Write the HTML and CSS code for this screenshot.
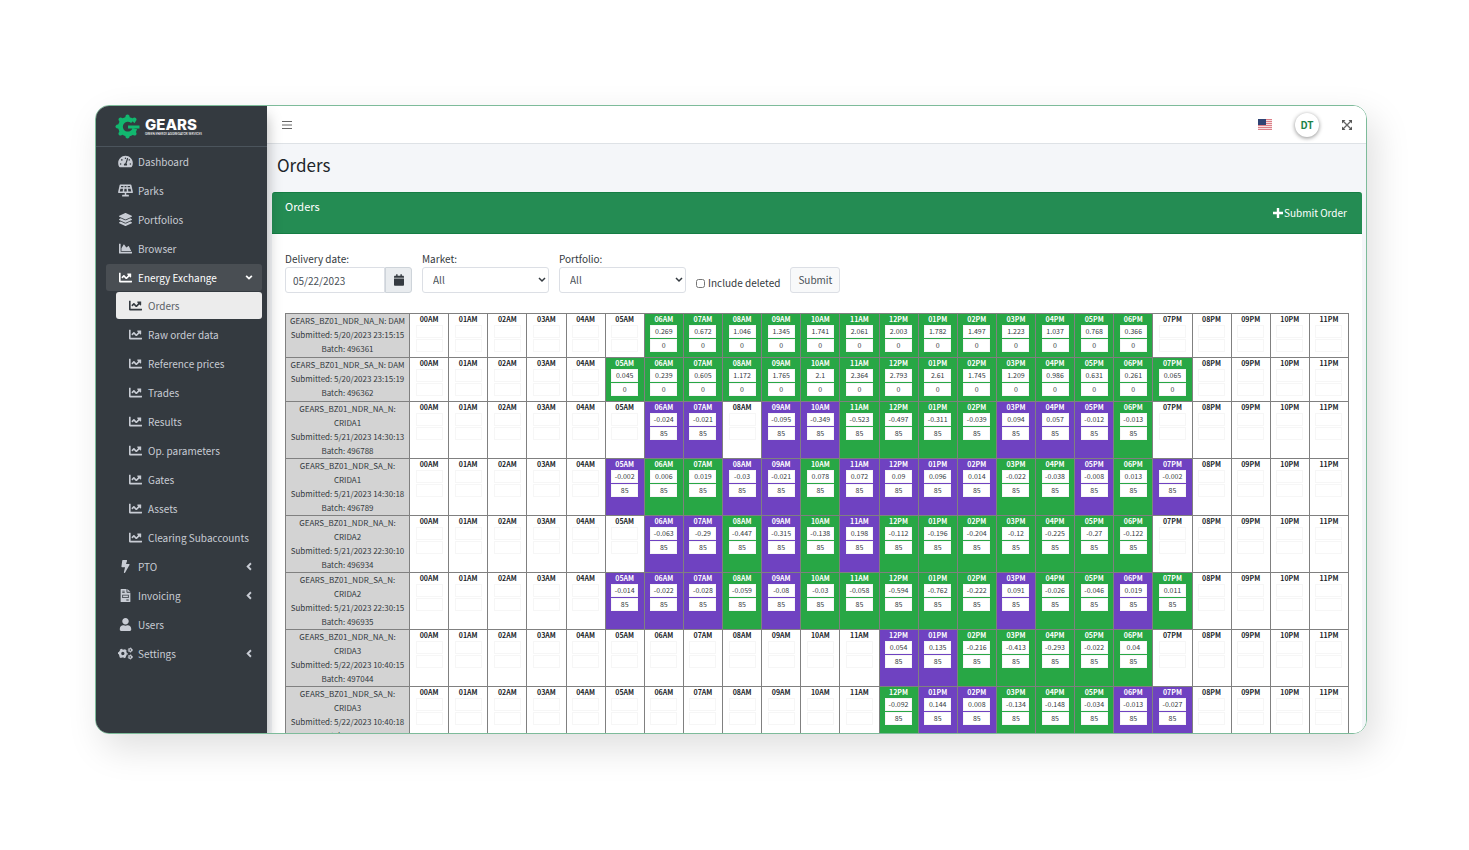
FILE: index.html
```html
<!DOCTYPE html>
<html lang="en">
<head>
<meta charset="utf-8">
<title>GEARS - Orders</title>
<link rel="stylesheet" href="styles.css">
</head>
<body>
<svg class="sprite" aria-hidden="true">
  <symbol id="i-line" viewBox="0 0 512 512"><path d="M496 384H64V80c0-8.84-7.16-16-16-16H16C7.16 64 0 71.16 0 80v336c0 17.67 14.33 32 32 32h464c8.84 0 16-7.16 16-16v-32c0-8.84-7.16-16-16-16zM464 96H345.94c-21.38 0-32.09 25.85-16.97 40.97l32.4 32.4L288 242.75l-73.37-73.37c-12.5-12.5-32.76-12.5-45.25 0l-68.69 68.69c-6.25 6.25-6.25 16.38 0 22.63l22.62 22.62c6.25 6.25 16.38 6.25 22.63 0L192 237.25l73.37 73.37c12.5 12.5 32.76 12.5 45.25 0l96-96 32.4 32.4c15.12 15.12 40.97 4.41 40.97-16.97V112c.01-8.84-7.15-16-15.99-16z"/></symbol>
  <symbol id="i-dash" viewBox="0 0 576 512"><path d="M288 32C128.94 32 0 160.94 0 320c0 52.8 14.25 102.26 39.06 144.8 5.61 9.62 16.3 15.2 27.44 15.2h443c11.14 0 21.83-5.58 27.44-15.2C561.75 422.26 576 372.8 576 320c0-159.06-128.94-288-288-288zm0 64c14.71 0 26.58 10.13 30.32 23.65-1.11 2.26-2.64 4.23-3.45 6.67l-9.22 27.67c-5.13 3.49-10.97 6.01-17.64 6.01-17.67 0-32-14.33-32-32S270.33 96 288 96zM96 384c-17.67 0-32-14.33-32-32s14.33-32 32-32 32 14.33 32 32-14.33 32-32 32zm48-160c-17.67 0-32-14.33-32-32s14.33-32 32-32 32 14.33 32 32-14.33 32-32 32zm246.77-72.41l-61.33 184C343.13 347.33 352 364.54 352 384c0 11.72-3.38 22.55-8.88 32H232.88c-5.5-9.45-8.88-20.28-8.88-32 0-33.94 26.5-61.43 59.9-63.59l61.34-184.01c4.17-12.56 17.73-19.45 30.36-15.17 12.57 4.19 19.35 17.79 15.17 30.36zm14.66 57.2l15.52-46.55c3.47-1.29 7.13-2.23 11.05-2.23 17.67 0 32 14.33 32 32s-14.33 32-32 32c-11.38-.01-20.89-6.28-26.57-15.22zM480 384c-17.67 0-32-14.33-32-32s14.33-32 32-32 32 14.33 32 32-14.33 32-32 32z"/></symbol>
  <symbol id="i-solar" viewBox="0 0 640 512"><path fill-rule="evenodd" d="M100 0h440q24 0 30 26l68 300q4 34-30 34H352v82h96q16 0 16 16v38q0 16-16 16H192q-16 0-16-16v-38q0-16 16-16h96v-82H32q-34 0-30-34L70 26q6-26 30-26zM134 60l-14 60h106l8-60zM284 60l-6 60h84l-6-60zM406 60l8 60h106l-14-60zM102 184l-24 112h122l14-112zM276 184l-12 112h112l-12-112zM426 184l14 112h122l-24-112z"/></symbol>
  <symbol id="i-layers" viewBox="0 0 512 512"><path d="M12.41 148.02l232.94 105.67c6.8 3.09 14.49 3.09 21.29 0l232.94-105.67c16.55-7.51 16.55-32.52 0-40.03L266.65 2.31a25.607 25.607 0 0 0-21.29 0L12.41 107.98c-16.55 7.51-16.55 32.53 0 40.04zm487.18 88.28l-58.09-26.33-161.64 73.27c-7.56 3.43-15.59 5.17-23.86 5.17s-16.29-1.74-23.86-5.17L70.51 209.97l-58.1 26.33c-16.55 7.5-16.55 32.5 0 40l232.94 105.59c6.8 3.08 14.49 3.08 21.29 0L499.59 276.3c16.55-7.5 16.55-32.5 0-40zm0 127.8l-57.87-26.23-161.86 73.37c-7.56 3.43-15.59 5.17-23.86 5.17s-16.29-1.74-23.86-5.17L70.29 337.87 12.41 364.1c-16.55 7.5-16.55 32.5 0 40l232.94 105.59c6.8 3.08 14.49 3.08 21.29 0L499.59 404.1c16.55-7.5 16.55-32.5 0-40z"/></symbol>
  <symbol id="i-area" viewBox="0 0 512 512"><path d="M500 384c6.6 0 12 5.4 12 12v40c0 6.6-5.4 12-12 12H12c-6.6 0-12-5.4-12-12V76c0-6.6 5.4-12 12-12h40c6.6 0 12 5.4 12 12v308h436zM372.7 159.5L288 216l-85.3-113.7c-5.1-6.8-15.5-6.3-19.9 1L96 248v104h384l-89.9-187.8c-3.2-6.5-11.4-8.7-17.4-4.7z"/></symbol>
  <symbol id="i-bolt" viewBox="0 0 320 512"><path d="M296 160H180.6l42.6-129.8C227.2 15 215.7 0 200 0H56C44 0 33.8 8.9 32.2 20.8l-32 240C-1.7 275.2 9.5 288 24 288h118.7L96.6 482.5c-3.6 15.2 8 29.5 23.3 29.5 8.4 0 16.4-4.4 20.8-12l176-304c9.3-15.9-2.2-36-20.7-36z"/></symbol>
  <symbol id="i-invoice" viewBox="0 0 384 512"><path fill-rule="evenodd" d="M24 0h208v120q0 24 24 24h128v344q0 24-24 24H24q-24 0-24-24V24Q0 0 24 0zM264 0l120 112H264zM64 64v32h96V64zM64 128v32h96v-32zM64 224v128h256V224zM96 256h192v64H96zM224 416v32h96v-32z"/></symbol>
  <symbol id="i-user" viewBox="0 0 448 512"><path d="M224 256c70.7 0 128-57.3 128-128S294.7 0 224 0 96 57.3 96 128s57.3 128 128 128zm89.6 32h-16.7c-22.2 10.2-46.9 16-72.9 16s-50.6-5.8-72.9-16h-16.7C60.2 288 0 348.2 0 422.4V464c0 26.5 21.5 48 48 48h352c26.5 0 48-21.5 48-48v-41.6c0-74.2-60.2-134.4-134.4-134.4z"/></symbol>
  <symbol id="i-cogs" viewBox="0 0 640 512"><g fill="none" stroke="currentColor"><circle cx="206" cy="256" r="120" stroke-width="100"/><circle cx="206" cy="256" r="180" stroke-width="52" stroke-dasharray="94 94.500" stroke-dashoffset="47"/><circle cx="524" cy="110" r="60" stroke-width="52"/><circle cx="524" cy="110" r="92" stroke-width="34" stroke-dasharray="50 46.300"/><circle cx="524" cy="402" r="60" stroke-width="52"/><circle cx="524" cy="402" r="92" stroke-width="34" stroke-dasharray="50 46.300"/></g></symbol>
  <symbol id="i-left" viewBox="0 0 10 14"><path d="M8 2 3 7l5 5" fill="none" stroke="currentColor" stroke-width="3"/></symbol>
  <symbol id="i-down" viewBox="0 0 14 10"><path d="m2 2 5 5 5-5" fill="none" stroke="currentColor" stroke-width="3"/></symbol>
  <symbol id="i-cal" viewBox="0 0 448 512"><path d="M12 192h424c6.6 0 12 5.4 12 12v260c0 26.5-21.5 48-48 48H48c-26.5 0-48-21.5-48-48V204c0-6.6 5.4-12 12-12zm436-44v-36c0-26.5-21.5-48-48-48h-48V12c0-6.6-5.4-12-12-12h-40c-6.6 0-12 5.4-12 12v52H160V12c0-6.6-5.4-12-12-12h-40c-6.6 0-12 5.4-12 12v52H48C21.5 64 0 85.5 0 112v36c0 6.6 5.4 12 12 12h424c6.6 0 12-5.4 12-12z"/></symbol>
</svg>
<div class="app">
  <aside class="sidebar">
    <a class="brand" href="#">
      <svg class="brand-mark" viewBox="0 0 48 48" aria-hidden="true">
        <g fill="none" stroke="#12b76f">
          <path d="M34 14A14 14 0 1 0 38 28" stroke-width="9"/>
          <path d="M47 25H25" stroke-width="6"/>
        </g>
        <g fill="#12b76f">
          <path id="tooth" d="M19 10 20.500 3q3.500-4 7 0L29 10z"/>
          <use href="#tooth" transform="rotate(45 24 24)"/>
          <use href="#tooth" transform="rotate(135 24 24)"/>
          <use href="#tooth" transform="rotate(180 24 24)"/>
          <use href="#tooth" transform="rotate(225 24 24)"/>
          <use href="#tooth" transform="rotate(270 24 24)"/>
          <use href="#tooth" transform="rotate(315 24 24)"/>
        </g>
      </svg>
      <span class="brand-text"><span class="brand-name">GEARS</span><span class="brand-tag">GREEN ENERGY AGGREGATOR SERVICES</span></span>
    </a>
    <nav>
      <ul class="nav">
        <li><a href="#"><svg class="ico"><use href="#i-dash"/></svg>Dashboard</a></li>
        <li><a href="#"><svg class="ico"><use href="#i-solar"/></svg>Parks</a></li>
        <li><a href="#"><svg class="ico"><use href="#i-layers"/></svg>Portfolios</a></li>
        <li><a href="#"><svg class="ico"><use href="#i-area"/></svg>Browser</a></li>
        <li><a href="#" class="open"><svg class="ico"><use href="#i-line"/></svg>Energy Exchange<svg class="caret"><use href="#i-down"/></svg></a>
          <ul class="nav sub">
            <li><a href="#" class="current"><svg class="ico"><use href="#i-line"/></svg>Orders</a></li>
            <li><a href="#"><svg class="ico"><use href="#i-line"/></svg>Raw order data</a></li>
            <li><a href="#"><svg class="ico"><use href="#i-line"/></svg>Reference prices</a></li>
            <li><a href="#"><svg class="ico"><use href="#i-line"/></svg>Trades</a></li>
            <li><a href="#"><svg class="ico"><use href="#i-line"/></svg>Results</a></li>
            <li><a href="#"><svg class="ico"><use href="#i-line"/></svg>Op. parameters</a></li>
            <li><a href="#"><svg class="ico"><use href="#i-line"/></svg>Gates</a></li>
            <li><a href="#"><svg class="ico"><use href="#i-line"/></svg>Assets</a></li>
            <li><a href="#"><svg class="ico"><use href="#i-line"/></svg>Clearing Subaccounts</a></li>
          </ul>
        </li>
        <li><a href="#"><svg class="ico"><use href="#i-bolt"/></svg>PTO<svg class="caret"><use href="#i-left"/></svg></a></li>
        <li><a href="#"><svg class="ico"><use href="#i-invoice"/></svg>Invoicing<svg class="caret"><use href="#i-left"/></svg></a></li>
        <li><a href="#"><svg class="ico"><use href="#i-user"/></svg>Users</a></li>
        <li><a href="#"><svg class="ico"><use href="#i-cogs"/></svg>Settings<svg class="caret"><use href="#i-left"/></svg></a></li>
      </ul>
    </nav>
  </aside>
  <div class="main">
    <header class="topbar">
      <button class="plain" type="button" aria-label="Toggle menu"><svg width="10" height="10" viewBox="0 0 10 10"><path d="M0 1.500h10M0 5h10M0 8.500h10" stroke="#666" stroke-width="1.200"/></svg></button>
      <div class="tools">
        <button class="plain" type="button" aria-label="Language"><svg width="14" height="11" viewBox="0 0 14 11"><path fill="#f6dfe1" d="M0 0h14v11H0z"/><path d="M0 .500h14M0 2.500h14M0 4.500h14M0 6.500h14M0 8.500h14M0 10.500h14" stroke="#dc7f88"/><path fill="#2f4374" d="M0 0h8v6H0z"/></svg></button>
        <button class="avatar" type="button">DT</button>
        <button class="plain" type="button" aria-label="Full screen"><svg width="10" height="10" viewBox="0 0 10 10"><path d="M1 1l8 8M9 1 1 9" stroke="#666" stroke-width="1.300"/><path fill="#555" d="M0 0h3.500L0 3.500zM10 0v3.500L6.500 0zM0 10V6.500L3.500 10zM10 10H6.500L10 6.500z"/></svg></button>
      </div>
    </header>
    <main>
      <h1>Orders</h1>
      <section class="card">
        <header class="card-head">
          <h2>Orders</h2>
          <button class="add" type="button"><svg width="10" height="10" viewBox="0 0 10 10"><path d="M5 0v10M0 5h10" stroke="#fff" stroke-width="2.400"/></svg>Submit Order</button>
        </header>
        <div class="card-body">
          <form class="filters">
            <div class="field">
              <label for="date">Delivery date:</label>
              <div class="group"><input id="date" type="text" value="05/22/2023"><button type="button" aria-label="Pick a date"><svg width="10" height="12"><use href="#i-cal"/></svg></button></div>
            </div>
            <div class="field">
              <label for="market">Market:</label>
              <div class="pick"><select id="market"><option>All</option></select><svg class="arrow" width="8" height="6" viewBox="0 0 8 6"><path d="m1 1 3 3 3-3" fill="none" stroke="#343a40" stroke-width="1.500"/></svg></div>
            </div>
            <div class="field">
              <label for="portfolio">Portfolio:</label>
              <div class="pick"><select id="portfolio"><option>All</option></select><svg class="arrow" width="8" height="6" viewBox="0 0 8 6"><path d="m1 1 3 3 3-3" fill="none" stroke="#343a40" stroke-width="1.500"/></svg></div>
            </div>
            <div class="check"><input id="deleted" type="checkbox"><label for="deleted">Include deleted</label></div>
            <button class="submit" type="submit">Submit</button>
          </form>
          <table class="orders"><tbody id="orders"></tbody></table>
        </div>
      </section>
    </main>
  </div>
</div>
<script src="orders.js"></script>
</body>
</html>
```
FILE: styles.css
```css
* { box-sizing: border-box; }
body {
  margin: 0;
  height: 100vh;
  padding: 105px 102px 116px 95px;
  display: flex;
  background: #fff;
  color: #343a40;
  font: 10px/14px "Noto Sans CJK SC", "Noto Sans", sans-serif;
}
a { color: inherit; text-decoration: none; }
button, input, select { font: inherit; color: inherit; }
button { padding: 0; border: 0; background: none; }
svg { fill: currentColor; flex: none; }
h1, h2 { margin: 0; font-weight: 400; }
.sprite { display: none; }

.app {
  flex: 1;
  min-width: 0;
  display: flex;
  overflow: hidden;
  border: 1px solid #7dbb9a;
  border-radius: 14px;
  box-shadow: 8px 14px 36px rgba(0, 0, 0, .13);
}

.sidebar {
  flex: none;
  width: 171px;
  background: #343a40;
  color: #c8ccd4;
  box-shadow: 0 10px 14px rgba(0, 0, 0, .3);
  z-index: 1;
}
.brand {
  display: flex;
  align-items: center;
  gap: 5px;
  height: 41px;
  padding-left: 19px;
  border-bottom: 1px solid #4b545c;
}
.brand-mark { width: 25px; height: 25px; }
.brand-text { display: flex; flex-direction: column; color: #fff; }
.brand-name { font: 800 15px/15px Inter, sans-serif; }
.brand-tag { font: 500 3px/4px Lato, sans-serif; white-space: nowrap; }

.nav { list-style: none; margin: 0; padding: 1px 5px 0 10px; display: grid; gap: 2px; }
.sub { padding: 1px 0 0 10px; }
.nav a {
  display: flex;
  align-items: center;
  gap: 5px;
  height: 27px;
  padding: 0 9px 0 12px;
  border-radius: 3px;
}
.sub a { gap: 5px; padding-right: 0; }
.nav .open { background: #494e53; color: #fff; }
.nav .current { background: #ececec; color: #5a6066; }
.current .ico { color: #343a40; }
.ico { width: 15px; height: 13px; }
.caret { width: 8px; height: 9px; margin-left: auto; }

.main { flex: 1; min-width: 0; background: #f4f6f9; }
.topbar {
  display: flex;
  justify-content: space-between;
  align-items: center;
  height: 38px;
  padding: 0 14px 0 15px;
  background: #fff;
  border-bottom: 1px solid #dee2e6;
}
.tools { display: flex; align-items: center; gap: 23px; }
.plain { display: flex; }
.avatar {
  width: 24px;
  height: 24px;
  border-radius: 50%;
  background: #fff;
  color: #1d8348;
  font-weight: 700;
  font-size: 10px;
  box-shadow: 0 1px 4px rgba(0, 0, 0, .45);
}
main { padding: 0 4px 0 5px; }
h1 { padding: 9px 5px 15px; font-size: 17px; line-height: 24px; color: #212529; }

.card { background: #fff; border-radius: 3px 3px 0 0; }
.card-head {
  display: flex;
  justify-content: space-between;
  height: 42px;
  padding: 7px 15px 0 13px;
  background: #248c53;
  border: solid #157d44;
  border-width: 1px 0;
  border-radius: 3px 3px 0 0;
  color: #fff;
}
.card-head h2 { font-size: 11px; line-height: 13px; }
.add { display: flex; align-items: center; gap: 1px; height: 26px; }
.card-body { padding: 18px 13px; }

.filters { display: flex; align-items: flex-end; gap: 10px; margin-bottom: 20px; }
.field { width: 127px; }
.field label { display: block; margin-bottom: 1px; }
.group { display: flex; }
.group input, .pick select, .submit {
  height: 26px;
  border: 1px solid #dcdfe5;
  border-radius: 3px;
  background: #fff;
  color: #495057;
}
.group input { flex: 1; min-width: 0; padding: 0 7px; border-radius: 3px 0 0 3px; }
.group button {
  display: grid;
  place-items: center;
  width: 27px;
  background: #e9ecef;
  border: 1px solid #ced4da;
  border-radius: 0 3px 3px 0;
}
.pick { display: grid; align-items: center; }
.pick select, .arrow { grid-area: 1 / 1; }
.pick select { appearance: none; width: 100%; padding: 0 10px; }
.arrow { justify-self: end; margin-right: 3px; pointer-events: none; }
.check { display: flex; align-items: center; gap: 3px; padding-bottom: 3px; }
.check input { width: 9px; height: 9px; margin: 0; }
.filters .submit { width: 50px; background: #f8f9fa; }

.orders { width: 100%; table-layout: fixed; border-collapse: collapse; }
.orders th, .orders td { padding: 0; border: 1px solid #808080; vertical-align: top; text-align: center; }
.orders th { width: 124px; background: #d3d3d3; font-size: 8px; font-weight: 400; white-space: nowrap; }
.short { height: 44px; }
.hour { display: block; font-size: 7px; line-height: 11px; font-weight: 700; color: #212529; }
.cell { display: grid; gap: 1px; width: 27px; margin: 0 auto; }
.cell span { height: 13px; border: 1px solid #f6f6f6; background: #fff; font-size: 7px; line-height: 11px; }
.buy { background: #28a745; }
.sell { background: #6f42c1; }
.buy .hour, .sell .hour { color: #fff; }
```
FILE: orders.js
```js
// Each order: name lines, submission time, batch, quantity, first hour, values.
// A value starts with "g" (buy) or "p" (sell); "x" is an empty hour.
const orders = [
  [["GEARS_BZ01_NDR_NA_N: DAM"], "5/20/2023 23:15:15", 496361, 0, 6, "g0.269 g0.672 g1.046 g1.345 g1.741 g2.061 g2.003 g1.782 g1.497 g1.223 g1.037 g0.768 g0.366"],
  [["GEARS_BZ01_NDR_SA_N: DAM"], "5/20/2023 23:15:19", 496362, 0, 5, "g0.045 g0.239 g0.605 g1.172 g1.765 g2.1 g2.364 g2.793 g2.61 g1.745 g1.209 g0.986 g0.631 g0.261 g0.065"],
  [["GEARS_BZ01_NDR_NA_N:", "CRIDA1"], "5/21/2023 14:30:13", 496788, 85, 6, "p-0.024 p-0.021 x p-0.095 p-0.349 g-0.523 g-0.497 g-0.311 g-0.039 p0.094 p0.057 p-0.012 g-0.013"],
  [["GEARS_BZ01_NDR_SA_N:", "CRIDA1"], "5/21/2023 14:30:18", 496789, 85, 5, "p-0.002 g0.006 g0.019 p-0.03 p-0.021 g0.078 p0.072 p0.09 p0.096 p0.014 g-0.022 g-0.038 p-0.008 g0.013 p-0.002"],
  [["GEARS_BZ01_NDR_NA_N:", "CRIDA2"], "5/21/2023 22:30:10", 496934, 85, 6, "p-0.063 p-0.29 g-0.447 p-0.315 g-0.138 p0.198 g-0.112 g-0.196 g-0.204 g-0.12 g-0.225 g-0.27 g-0.122"],
  [["GEARS_BZ01_NDR_SA_N:", "CRIDA2"], "5/21/2023 22:30:15", 496935, 85, 5, "p-0.014 p-0.022 p-0.028 g-0.059 p-0.08 g-0.03 g-0.058 g-0.594 g-0.762 g-0.222 p0.091 g-0.026 g-0.046 p0.019 g0.011"],
  [["GEARS_BZ01_NDR_NA_N:", "CRIDA3"], "5/22/2023 10:40:15", 497044, 85, 12, "p0.054 p0.135 g-0.216 g-0.413 g-0.293 g-0.022 g0.04"],
  [["GEARS_BZ01_NDR_SA_N:", "CRIDA3"], "5/22/2023 10:40:18", 497045, 85, 12, "g-0.092 p0.144 p0.008 g-0.134 g-0.148 g-0.034 p-0.013 p-0.027"]
];

const hourLabel = h => String(h > 12 ? h - 12 : h).padStart(2, "0") + (h < 12 ? "AM" : "PM");

document.getElementById("orders").innerHTML = orders.map(([name, time, batch, qty, first, list]) => {
  const values = list.split(" ");
  let cells = "";
  for (let h = 0; h < 24; h++) {
    const v = values[h - first] || "x";
    const kind = { g: "buy", p: "sell", x: "" }[v[0]];
    const filled = kind !== "";
    cells += `<td class="${kind}"><b class="hour">${hourLabel(h)}</b><div class="cell"><span>${v.slice(1)}</span><span>${filled ? qty : ""}</span></div></td>`;
  }
  return `<tr class="${name.length === 1 ? "short" : ""}"><th scope="row">${name.join("<br>")}<br>Submitted: ${time}<br>Batch: ${batch}</th>${cells}</tr>`;
}).join("");
```
